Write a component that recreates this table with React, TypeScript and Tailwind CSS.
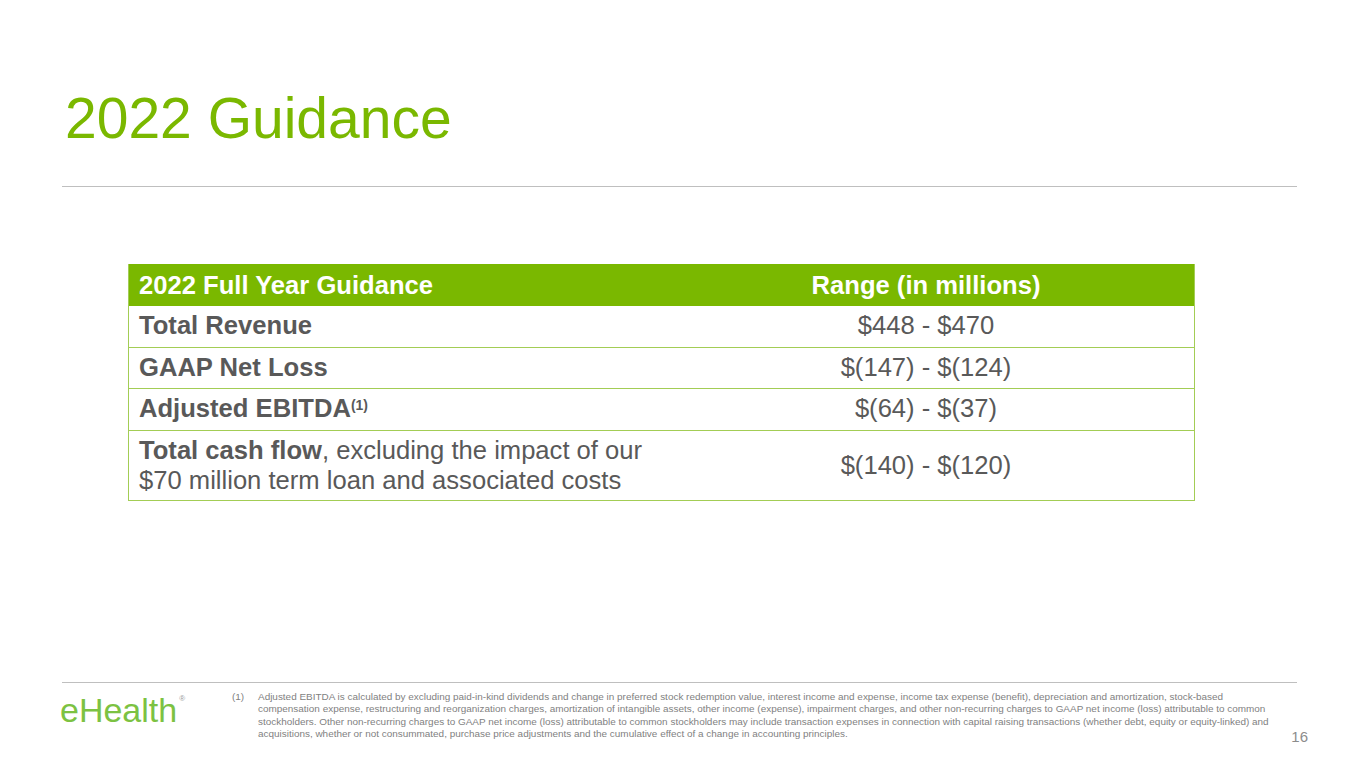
import React from "react";

const rows = [
  { label: "Total Revenue", value: "$448 - $470" },
  { label: "GAAP Net Loss", value: "$(147) - $(124)" },
  { label: "Adjusted EBITDA", sup: "(1)", value: "$(64) - $(37)" },
];

const App = () => {
  return (
    <div className="w-[1365px] h-[768px] bg-white flex flex-col font-['Liberation_Sans',Arial,sans-serif] overflow-hidden">
      {/* Title */}
      <h1 className="pt-[90px] pl-[65px] text-[57px] leading-none text-[#7ab800]">2022 Guidance</h1>
      <div className="ml-[62px] mt-[39px] w-[1235px] h-px bg-[#bfbfbf]" />

      {/* Guidance table */}
      <div className="ml-[128px] mt-[77px] w-[1067px] border-x border-b border-[#a3cd55] text-[25.6px] text-[#595959]">
        <div className="flex h-[42px] items-center bg-[#7ab800] font-bold text-white">
          <div className="w-[529px] pl-[10px]">2022 Full Year Guidance</div>
          <div className="flex-1 text-center">Range (in millions)</div>
        </div>
        {rows.map((row) => (
          <div key={row.label} className="flex h-[41.5px] items-center border-b border-[#a3cd55] leading-none">
            <div className="w-[529px] pl-[10px] font-bold">
              {row.label}
              {row.sup && <sup className="text-[14px] font-bold">{row.sup}</sup>}
            </div>
            <div className="flex-1 text-center">{row.value}</div>
          </div>
        ))}
        <div className="flex h-[69px] items-center leading-[30px]">
          <div className="w-[529px] pl-[10px]">
            <span className="font-bold">Total cash flow</span>, excluding the impact of our
            <br />
            $70 million term loan and associated costs
          </div>
          <div className="flex-1 text-center">$(140) - $(120)</div>
        </div>
      </div>

      {/* Footer */}
      <div className="mt-auto h-[86px] flex flex-col">
        <div className="ml-[62px] w-[1235px] h-px bg-[#bfbfbf]" />
        <div className="flex pl-[60px]">
          <div className="w-[172px] pt-[10px] text-[34px] leading-none text-[#7cc242] flex items-start">
            <span>eHealth</span>
            <span className="text-[8px] text-[#9a9a9a] ml-[2px] mt-[2px]">®</span>
          </div>
          <div className="flex pt-[8px] text-[9.95px] leading-[12.4px] text-[#7f7f7f]">
            <div className="w-[26px]">(1)</div>
            <div className="w-[1020px]">
              Adjusted EBITDA is calculated by excluding paid-in-kind dividends and change in preferred stock redemption value, interest income and expense, income tax expense (benefit), depreciation and amortization, stock-based compensation expense, restructuring and reorganization charges, amortization of intangible assets, other income (expense), impairment charges, and other non-recurring charges to GAAP net income (loss) attributable to common stockholders. Other non-recurring charges to GAAP net income (loss) attributable to common stockholders may include transaction expenses in connection with capital raising transactions (whether debt, equity or equity-linked) and acquisitions, whether or not consummated, purchase price adjustments and the cumulative effect of a change in accounting principles.
            </div>
          </div>
          <div className="ml-auto pr-[57px] pt-[46px] text-[15px] leading-none text-[#8c8c8c]">16</div>
        </div>
      </div>
    </div>
  );
};

export default App;
